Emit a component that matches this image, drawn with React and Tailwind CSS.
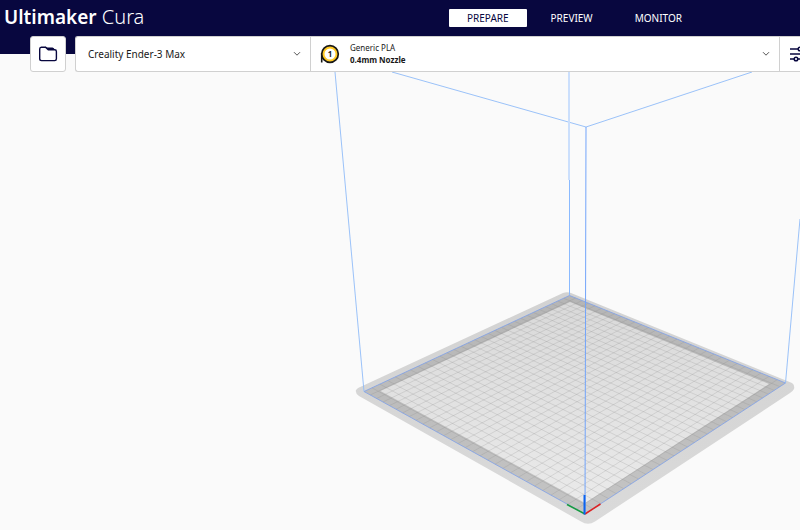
import React from "react";

const BACK = [569.5, 295.5];
const RIGHT = [785.5, 383];
const FRONT = [585, 514];
const LEFT = [364, 391.5];

// Perspective mapping from the unit square to the four corners of the bed.
function makeProjection([p0, p1, p2, p3]) {
  const dx1 = p1[0] - p2[0];
  const dx2 = p3[0] - p2[0];
  const dx3 = p0[0] - p1[0] + p2[0] - p3[0];
  const dy1 = p1[1] - p2[1];
  const dy2 = p3[1] - p2[1];
  const dy3 = p0[1] - p1[1] + p2[1] - p3[1];
  const det = dx1 * dy2 - dx2 * dy1;
  const g = (dx3 * dy2 - dx2 * dy3) / det;
  const h = (dx1 * dy3 - dx3 * dy1) / det;
  const a = p1[0] - p0[0] + g * p1[0];
  const b = p3[0] - p0[0] + h * p3[0];
  const d = p1[1] - p0[1] + g * p1[1];
  const e = p3[1] - p0[1] + h * p3[1];
  return (u, v) => {
    const w = g * u + h * v + 1;
    return [
      ((a * u + b * v + p0[0]) / w).toFixed(2),
      ((d * u + e * v + p0[1]) / w).toFixed(2),
    ];
  };
}

const project = makeProjection([BACK, RIGHT, FRONT, LEFT]);
const CELLS = 30;
const gridPath = Array.from({ length: CELLS - 1 }, (_, i) => {
  const t = (i + 1) / CELLS;
  return `M${project(t, 0)}L${project(t, 1)}M${project(0, t)}L${project(1, t)}`;
}).join("");

function BuildVolume() {
  return (
    <svg
      viewBox="0 72 800 458"
      className="block h-auto w-full"
      role="img"
      aria-label="Build volume"
    >
      <defs>
        <linearGradient id="bed" x1="0" y1="0" x2="0" y2="1">
          <stop offset="0" stopColor="#d9d9d9" />
          <stop offset="1" stopColor="#eaeaea" />
        </linearGradient>
        <linearGradient id="rim" x1="0" y1="0" x2="0" y2="1">
          <stop offset="0" stopColor="#b5b5b5" />
          <stop offset="1" stopColor="#c4c4c4" />
        </linearGradient>
        <linearGradient id="plate" x1="0" y1="0" x2="0" y2="1">
          <stop offset="0" stopColor="#d2d2d2" />
          <stop offset="1" stopColor="#dadada" />
        </linearGradient>
      </defs>
      <path
        d="M358 388L563 293Q567 291.500 571 293L792 383Q795 385 794 389Q793 391 790 393L595 521.500Q588 526 581 521.500L359 396Q355 393 356 390Z"
        fill="url(#plate)"
      />
      <path d="M569.500 295.500L785.500 383L585 514L364 391.500Z" fill="url(#rim)" />
      <path d="M570 302L769 384L585 503L380.500 391Z" fill="url(#bed)" />
      <path d={gridPath} stroke="#808080" strokeOpacity="0.25" strokeWidth="0.8" fill="none" />
      <g fill="none" stroke="#8fbbf8" strokeWidth="0.9">
        <path d="M569.500 295.500L785.500 383L585 514L364 391.500Z" stroke="#7d9fe8" strokeWidth="0.8" />
        <path d="M335 72L364 391.500" />
        <path d="M392 72L586 127L752 72" />
        <path d="M569 72V180" stroke="#cbdffc" strokeWidth="2" />
        <path d="M569.500 180V295" stroke="#8abaff" strokeWidth="1" />
        <path d="M586 127L585 514" stroke="#72a4fa" strokeWidth="1" />
        <path d="M800 219L785.500 383" />
      </g>
      <path d="M585 514L567 504.500" stroke="#169b40" strokeWidth="1.500" />
      <path d="M585 514L600.500 504" stroke="#dd2222" strokeWidth="1.500" />
      <path d="M584.500 514.500V495" stroke="#0b62ee" strokeWidth="2" />
    </svg>
  );
}

function Chevron() {
  return (
    <svg viewBox="0 0 8 6" className="h-[6px] w-2 shrink-0" aria-hidden="true">
      <path d="M1 1.200L4 4.200L7 1.200" fill="none" stroke="#555" strokeWidth="1" />
    </svg>
  );
}

function FolderIcon() {
  return (
    <svg viewBox="0 0 20 18" className="h-[18px] w-5" aria-hidden="true">
      <path
        d="M3.300 2.200H7.500L10.300 4.800H16.700Q18.400 4.800 18.400 6.500V13.800Q18.400 15.600 16.700 15.600H3.500Q1.700 15.600 1.700 13.800V4Q1.700 2.200 3.300 2.200Z"
        fill="none"
        stroke="#08073f"
        strokeWidth="1.400"
      />
      <path d="M7.300 1.600L9.300 2.600H14.500Q16.300 2.900 16.700 5H10.300Z" fill="#08073f" />
    </svg>
  );
}

function SpoolIcon() {
  return (
    <svg viewBox="0 0 20 20" className="h-5 w-5 shrink-0" aria-hidden="true">
      <path d="M1.700 9V18.500" stroke="#171717" strokeWidth="1.600" />
      <circle cx="10" cy="10" r="8.300" fill="#ffc924" stroke="#171717" strokeWidth="1.700" />
      <circle cx="10" cy="10" r="5.500" fill="#fff" />
      <text
        x="10"
        y="13"
        textAnchor="middle"
        fontSize="8"
        fontWeight="700"
        fill="#171717"
      >
        1
      </text>
    </svg>
  );
}

function SettingsIcon() {
  return (
    <svg viewBox="0 0 20 18" className="h-[18px] w-5 shrink-0" aria-hidden="true">
      <g stroke="#08073f" strokeWidth="1.500" fill="#fff">
        <path d="M0 4H18M0 9H18M0 14H18" />
        <circle cx="10" cy="4" r="1.800" />
        <circle cx="6" cy="14" r="1.800" />
      </g>
    </svg>
  );
}

const STAGES = ["PREPARE", "PREVIEW", "MONITOR"];

export default function App() {
  const [stage, setStage] = React.useState("PREPARE");
  return (
    <div className="min-h-screen overflow-hidden bg-[#fafafa] font-['Noto_Sans',sans-serif] text-[#191919]">
      <header className="flex h-[54px] items-start bg-[#08073f] pl-1">
        <h1 className="w-[445px] shrink-0 text-[20px] leading-[34px] font-light whitespace-nowrap text-white">
          <span className="text-[19px] font-semibold">Ultimaker</span> Cura
        </h1>
        <nav className="flex gap-[6px] pt-[9px]">
          {STAGES.map((name) => (
            <button
              key={name}
              type="button"
              onClick={() => setStage(name)}
              className={`h-[18px] rounded-[1px] px-[18px] text-[10px] leading-[18px] ${
                name === stage ? "bg-white text-[#08073f]" : "text-white"
              }`}
            >
              {name}
            </button>
          ))}
        </nav>
      </header>

      <div className="relative -mt-[18px] flex h-9 gap-[9px] pl-[30px]">
        <button
          type="button"
          aria-label="Open file"
          className="flex w-9 shrink-0 items-center justify-center rounded-[3px] border border-[#d0d0d0] bg-white"
        >
          <FolderIcon />
        </button>
        <div className="flex min-w-0 flex-1 rounded-l-[3px] border border-r-0 border-[#d0d0d0] bg-white">
          <div className="grid w-[234px] shrink-0 items-center">
            <select
              aria-label="Printer"
              className="col-start-1 row-start-1 h-full w-full appearance-none bg-transparent pl-3 text-[10px]"
            >
              <option>Creality Ender-3 Max</option>
            </select>
            <span className="pointer-events-none col-start-1 row-start-1 mr-[9px] justify-self-end">
              <Chevron />
            </span>
          </div>
          <button
            type="button"
            aria-haspopup="true"
            className="flex min-w-0 flex-1 items-center border-l border-[#d0d0d0] pr-[9px] pl-[9px] text-left"
          >
            <SpoolIcon />
            <span className="ml-[10px] flex-1 text-[8px] leading-[12px]">
              <span className="block">Generic PLA</span>
              <span className="block font-bold">0.4mm Nozzle</span>
            </span>
            <Chevron />
          </button>
          <button
            type="button"
            aria-label="Print settings"
            className="flex w-[21px] shrink-0 items-center overflow-hidden border-l border-[#d0d0d0] pl-[10px]"
          >
            <SettingsIcon />
          </button>
        </div>
      </div>

      <main>
        <BuildVolume />
      </main>
    </div>
  );
}
